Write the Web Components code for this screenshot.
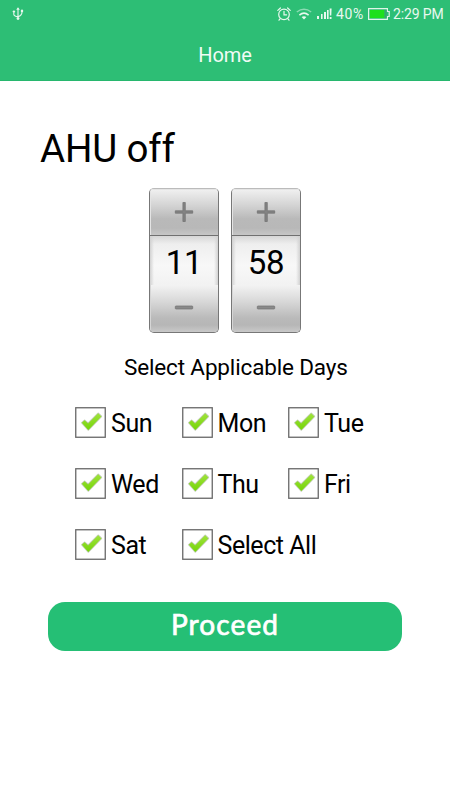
<!DOCTYPE html>
<html lang="en">
<head>
<meta charset="utf-8">
<title>Home</title>
<style>
html,body{margin:0;background:#fff}
body{width:450px;height:800px;overflow:hidden;font-family:Roboto,sans-serif;color:#000}
</style>
</head>
<body>
<ahu-screen></ahu-screen>
<script>
class BaseElement extends HTMLElement {
  constructor() {
    super();
    this.attachShadow({mode: 'open'}).innerHTML = this.view();
  }
}

customElements.define('status-bar', class extends BaseElement {
  view() {
    return `<style>
      :host{display:flex;height:27px;align-items:center;color:#e9f8ef;padding:0 6px 0 12px;box-sizing:border-box}
      svg{display:block;flex:none}
      .space{flex:1}
      span{font-size:14px;line-height:28px;white-space:nowrap}
      .pct{width:28px;margin-left:4px;letter-spacing:.6px}
      .time{width:51px;margin-left:3px;letter-spacing:-.15px}
      .wifi{margin-left:5px}.signal{margin-left:5px}.battery{margin-left:4px}
    </style>
    <svg width="12" height="14" viewBox="0 0 12 14" fill="none" stroke="currentColor" stroke-width="1.1">
      <path d="M6 1.5V11M1.8 5.5V7.2Q2 9.3 6 9.8Q10 8.5 10 5"/>
      <path d="M6 .2L7.8 2.8H4.2Z" fill="currentColor" stroke="none"/>
      <circle cx="6" cy="11.6" r="1.4" fill="currentColor" stroke="none"/>
      <circle cx="1.9" cy="4.6" r="1.2" fill="currentColor" stroke="none"/>
      <path d="M8.9 2.7h2.2v2.4H8.9Z" fill="currentColor" stroke="none"/>
    </svg>
    <div class="space"></div>
    <svg width="14" height="14" viewBox="0 0 14 14" fill="none" stroke="currentColor" stroke-width="1.2" stroke-linecap="round">
      <circle cx="7" cy="7.4" r="5.3"/><path d="M7 4.3V7.8H9.6M.8 3.4L3.4 1M13.2 3.4L10.6 1M3 11.8L2 13.2M11 11.8L12 13.2"/>
    </svg>
    <svg class="wifi" width="16" height="14" viewBox="0 0 16 14" fill="none" stroke="currentColor" stroke-width="1.5">
      <path d="M.8 5Q8-.3 15.2 5" opacity=".5"/><path d="M3.4 8.1Q8 4.1 12.6 8.1"/>
      <path d="M5.6 10Q8 8.4 10.4 10L8 12.4Z" fill="currentColor" stroke="none"/>
    </svg>
    <svg class="signal" width="15" height="12" viewBox="0 0 15 12" fill="currentColor">
      <path d="M0 8h2v3H0ZM4 6h1.6v5H4ZM7 4h2v7H7ZM10 2h1.6v9H10ZM12.6 .5h2l-.3 7h-1.4ZM12.7 9h1.8v2h-1.8Z"/>
    </svg>
    <span class="pct">40%</span>
    <svg class="battery" width="22" height="12" viewBox="0 0 22 12">
      <path d="M.6.6H19.4V3.5H21.2V8.5H19.4V11.4H.6Z" fill="none" stroke="#dff5e7" stroke-width="1.2"/>
      <path d="M2 2H16.5V10H2Z" fill="#1de01d"/><path d="M16.5 2H18.6V10H16.5Z" fill="#35a76e"/>
    </svg>
    <span class="time">2:29 PM</span>`;
  }
});

customElements.define('title-bar', class extends BaseElement {
  view() {
    return `<style>
      :host{display:flex;height:54px;justify-content:center;box-sizing:border-box;border-bottom:1px solid #27b76e;color:#f1fbf5;font-size:20px;line-height:56px;letter-spacing:-.1px}
    </style><slot></slot>`;
  }
});

customElements.define('number-picker', class extends BaseElement {
  view() {
    return `<style>
      :host{display:flex;flex-direction:column;width:70px;height:145px;box-sizing:border-box;border:1px solid #777;border-top-color:#bbb;border-radius:5px;overflow:hidden;background:#ddd}
      .btn{display:flex;align-items:center;justify-content:center;box-sizing:border-box}
      .up{height:46px;padding-bottom:1px;background:linear-gradient(#f1f1f1,#d4d4d4 35%,#b9b9b9 65%,#b8b8b8 85%,#c6c6c6);box-shadow:inset 1px 1px #e4e4e4}
      .down{height:47px;padding-bottom:1px;background:linear-gradient(#f3f3f3,#d8d8d8 35%,#bababa 70%,#b6b6b6 85%,#c9c9c9);box-shadow:inset 1px 0 #d6d6d6}
      .value{height:50px;box-sizing:border-box;border-top:1px solid #707070;font-size:33px;line-height:53px;text-align:center;letter-spacing:-.3px;background:linear-gradient(90deg,#d2d2d2,transparent 4px,transparent 64px,#d2d2d2),linear-gradient(#d6d6d6,#eee 8px,#f8f8f8 60%,#f2f2f2)}
      svg{display:block}
    </style>
    <div class="btn up"><svg width="20" height="22" viewBox="0 0 20 22"><path d="M8.9 1.5H11.3V9.8H18.7V12.2H11.3V20.5H8.9V12.2H1.3V9.8H8.9Z" fill="#838383" stroke="#707070" stroke-width=".7" stroke-linejoin="round"/></svg></div>
    <div class="value"><slot></slot></div>
    <div class="btn down"><svg width="20" height="6" viewBox="0 0 20 6"><rect x="1.3" y="1" width="17.4" height="3" rx=".7" fill="#8a8a8a" stroke="#707070" stroke-width=".7"/></svg></div>`;
  }
});

customElements.define('day-check', class extends BaseElement {
  view() {
    return `<style>
      :host{display:flex;align-items:center;height:31px;gap:5px;font-size:25px;line-height:31px;white-space:nowrap;letter-spacing:-.45px}
      svg{display:block;flex:none}
      span{padding-top:2px}
    </style>
    <svg width="31" height="31" viewBox="0 0 31 31">
      <defs><linearGradient id="g" x1="0" y1="0" x2="0" y2="1"><stop offset="0" stop-color="#a0e33c"/><stop offset="1" stop-color="#74d408"/></linearGradient></defs>
      <rect x=".75" y=".75" width="29.5" height="29.5" fill="#fff" stroke="#686868" stroke-width="1.3"/>
      <path d="M6.8 15.8L9.6 13.2L13.1 16.4L23.2 6.2L26.4 9.4L13.3 23Z" fill="url(#g)" stroke="#c3cdb8" stroke-width="1.5" stroke-linejoin="round" paint-order="stroke"/>
    </svg><span><slot></slot></span>`;
  }
});

customElements.define('proceed-button', class extends BaseElement {
  view() {
    return `<style>
      :host{display:block}
      button{display:block;width:100%;height:49px;border:0;border-radius:17px;padding:0 0 4px;background:#25bf75;color:#fff;font:400 28px/45px Lato,sans-serif;letter-spacing:1.1px;-webkit-text-stroke:.7px #fff}
    </style><button><slot></slot></button>`;
  }
});

customElements.define('ahu-screen', class extends BaseElement {
  view() {
    return `<style>
      :host{display:flex;flex-direction:column;width:450px;height:800px;background:#fff}
      header{background:#2dbe75;height:81px}
      h1{margin:45px 0 0 40px;font-size:38.5px;font-weight:400;line-height:46px;height:46px;letter-spacing:-.15px}
      .pickers{display:flex;gap:12px;margin:16px 0 0 149px}
      h2{margin:18px 0 0 124px;font-size:22.5px;font-weight:400;line-height:32px;height:32px;white-space:nowrap;letter-spacing:-.15px}
      .days{display:grid;grid-template-columns:106.5px 106.5px 107px;row-gap:30px;margin:24px 0 0 75px}
      .all{grid-column:span 2}
      proceed-button{margin:42px 48px 0}
    </style>
    <header><status-bar></status-bar><title-bar>Home</title-bar></header>
    <h1>AHU off</h1>
    <div class="pickers"><number-picker>11</number-picker><number-picker>58</number-picker></div>
    <h2>Select Applicable Days</h2>
    <div class="days">
      <day-check>Sun</day-check><day-check>Mon</day-check><day-check>Tue</day-check>
      <day-check>Wed</day-check><day-check>Thu</day-check><day-check>Fri</day-check>
      <day-check>Sat</day-check><day-check class="all">Select All</day-check>
    </div>
    <proceed-button>Proceed</proceed-button>`;
  }
});
</script>
</body>
</html>
